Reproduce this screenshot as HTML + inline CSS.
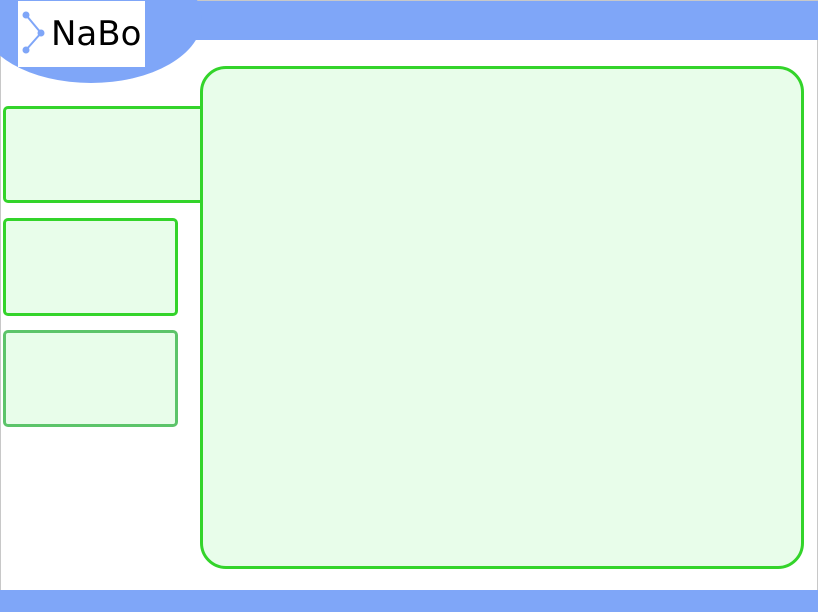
<!DOCTYPE html>
<html><head><style>
html,body{margin:0;padding:0;}
body{width:818px;height:612px;position:relative;overflow:hidden;background:#fff;}
.frame{position:absolute;left:0;top:0;width:816px;height:610px;border:1px solid #c8c8c8;}
.top{position:absolute;left:1px;top:1px;width:817px;height:39px;background:#7fa6f8;}
.ell{position:absolute;left:-20px;top:-45px;width:222px;height:128px;border-radius:50%;background:#7fa6f8;}
.logo{position:absolute;left:18px;top:1px;width:127px;height:66px;background:#fff;}
.logo span{position:absolute;left:33px;top:13px;font:34px "DejaVu Sans","Liberation Sans",sans-serif;color:#000;}
.main{position:absolute;left:200px;top:66px;width:598px;height:497px;border:3px solid #33d42a;border-radius:26px;background:#e8fdea;}
.tab{position:absolute;background:#e8fdea;border:3px solid #33d42a;border-radius:5px;}
.bot{position:absolute;left:0;top:590px;width:818px;height:22px;background:#7fa6f8;}
</style></head><body>
<div class="frame"></div>
<div class="top"></div>
<div class="ell"></div>
<div class="logo">
<svg width="30" height="60" style="position:absolute;left:2px;top:5px">
<polyline points="6,9 21,27 6,44" fill="none" stroke="#7fa6f8" stroke-width="2"/>
<circle cx="6" cy="9" r="3.5" fill="#7fa6f8"/><circle cx="21" cy="27" r="3.5" fill="#7fa6f8"/><circle cx="6" cy="44" r="3.5" fill="#7fa6f8"/>
</svg>
<span>NaBo</span></div>
<div class="tab" style="left:3px;top:106px;width:198px;height:91px;"></div>
<div class="tab" style="left:3px;top:218px;width:169px;height:92px;"></div>
<div class="tab" style="left:3px;top:330px;width:169px;height:91px;border-color:#5cc46a;"></div>
<div class="main"></div>
<div class="bot"></div>
</body></html>
